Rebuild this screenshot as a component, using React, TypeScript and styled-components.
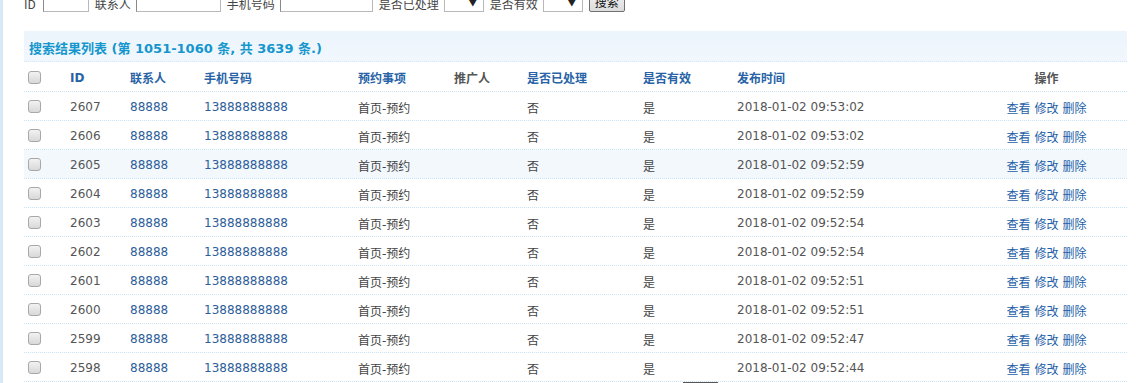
import { FunctionComponent } from "react";
import styled, { createGlobalStyle } from "styled-components";

const GlobalStyle = createGlobalStyle`
  html, body {
    margin: 0;
    padding: 0;
    background: #fff;
    overflow: hidden;
  }
  body {
    border-left: 3px solid #d6e9f5;
    min-height: 383px;
    box-sizing: border-box;
    font-family: "DejaVu Sans", "Noto Sans CJK SC", sans-serif;
    font-size: 12px;
    color: #333;
  }
`;

const cjk = `"DejaVu Sans", "Noto Sans CJK SC", sans-serif`;

const Page = styled.div`
  padding: 0 19px 0 21px;
  margin-top: -10px;
`;

const FilterBar = styled.div`
  display: flex;
  flex-direction: row;
  align-items: center;
  height: 22px;
  font-family: "Noto Sans CJK SC", sans-serif;
  font-size: 12px;
  color: #444;
`;

const Label = styled.span<{ $gap?: number }>`
  margin: 0 ${(p) => p.$gap ?? 5}px 0 0;
  line-height: 22px;
  position: relative;
  top: 3px;
`;

const TextBox = styled.div<{ $w: number }>`
  width: ${(p) => p.$w}px;
  height: 22px;
  box-sizing: border-box;
  border: 1px solid #b8b8b8;
  border-left-color: #8a8a8a;
  border-top-color: #8a8a8a;
  background: #fff;
  margin-right: 6px;
`;

const SelectBox = styled.div`
  width: 40px;
  height: 22px;
  box-sizing: border-box;
  border: 1px solid #b8b8b8;
  background: #fff;
  margin-right: 6px;
  display: flex;
  align-items: flex-end;
  justify-content: flex-end;
  padding: 0 6px 3px 0;
  font-size: 8px;
  color: #222;
`;

const SearchButton = styled.div`
  width: 36px;
  height: 22px;
  box-sizing: border-box;
  border: 1px solid #707070;
  border-radius: 2px;
  background: linear-gradient(#f4f4f4, #dcdcdc);
  display: flex;
  align-items: flex-end;
  justify-content: center;
  padding-bottom: 1px;
  font-size: 12px;
  color: #111;
`;

const Panel = styled.div`
  width: 1103px;
  margin-top: 19px;
`;

const TitleBar = styled.div`
  height: 31px;
  background: linear-gradient(#ecf4fc, #f1f7fd);
  border-bottom: 1px dotted #cfe6f7;
  box-sizing: border-box;
  display: flex;
  align-items: center;
  padding-left: 5px;
  padding-top: 2px;
  font-family: ${cjk};
  font-size: 13px;
  font-weight: bold;
  color: #1596cc;
`;

const cols = "42px 60px 74px 154px 96px 73px 116px 94px 233px 161px";

const Row = styled.div<{ $hl?: boolean; $h: number }>`
  display: grid;
  grid-template-columns: ${cols};
  height: ${(p) => p.$h}px;
  align-items: center;
  border-bottom: 1px dotted #c9e3f5;
  box-sizing: border-box;
  background: ${(p) => (p.$hl ? "#f3f8fd" : "#fff")};
`;

const Cell = styled.div<{ $color?: string; $center?: boolean; $bold?: boolean }>`
  padding-left: ${(p) => (p.$center ? 0 : 4)}px;
  text-align: ${(p) => (p.$center ? "center" : "left")};
  color: ${(p) => p.$color || "#555"};
  font-weight: ${(p) => (p.$bold ? "bold" : "normal")};
  font-family: ${cjk};
  font-size: 12px;
  white-space: nowrap;
  padding-top: 2px;
`;

const Check = styled.span`
  display: inline-block;
  width: 13px;
  height: 13px;
  box-sizing: border-box;
  border: 1px solid #a8a8a8;
  border-radius: 3px;
  background: linear-gradient(#f2f2f2, #d8d8d8);
  vertical-align: middle;
  margin-top: -2px;
`;

const Action = styled.a`
  color: #1f5fa8;
  text-decoration: none;
  margin: 0 2px;
`;

const Pager = styled.div`
  margin-left: 659px;
  width: 35px;
  border-top: 1px solid #555;
`;

const rows = [
  { id: 2607, done: "否", t: "2018-01-02 09:53:02" },
  { id: 2606, done: "否", t: "2018-01-02 09:53:02" },
  { id: 2605, done: "否", t: "2018-01-02 09:52:59", hl: true },
  { id: 2604, done: "否", t: "2018-01-02 09:52:59" },
  { id: 2603, done: "否", t: "2018-01-02 09:52:54" },
  { id: 2602, done: "否", t: "2018-01-02 09:52:54" },
  { id: 2601, done: "否", t: "2018-01-02 09:52:51" },
  { id: 2600, done: "否", t: "2018-01-02 09:52:51" },
  { id: 2599, done: "否", t: "2018-01-02 09:52:47" },
  { id: 2598, done: "否", t: "2018-01-02 09:52:44" },
];

const blue = "#2763a6";
const link = "#2d5d9a";

const App: FunctionComponent = () => {
  return (
    <Page>
      <GlobalStyle />
      <FilterBar>
        <Label $gap={7}>ID</Label>
        <TextBox $w={46} />
        <Label>联系人</Label>
        <TextBox $w={85} />
        <Label>手机号码</Label>
        <TextBox $w={93} />
        <Label>是否已处理</Label>
        <SelectBox>▼</SelectBox>
        <Label>是否有效</Label>
        <SelectBox>▼</SelectBox>
        <SearchButton>搜索</SearchButton>
      </FilterBar>
      <Panel>
        <TitleBar>搜索结果列表 (第 1051-1060 条, 共 3639 条.)</TitleBar>
        <Row $h={30}>
          <Cell>
            <Check />
          </Cell>
          <Cell $color={blue} $bold>ID</Cell>
          <Cell $color={blue} $bold>联系人</Cell>
          <Cell $color={blue} $bold>手机号码</Cell>
          <Cell $color={blue} $bold>预约事项</Cell>
          <Cell $color="#555" $bold>推广人</Cell>
          <Cell $color={blue} $bold>是否已处理</Cell>
          <Cell $color={blue} $bold>是否有效</Cell>
          <Cell $color={blue} $bold>发布时间</Cell>
          <Cell $color="#555" $bold $center>操作</Cell>
        </Row>
        {rows.map((r) => (
          <Row key={r.id} $h={29} $hl={r.hl}>
            <Cell>
              <Check />
            </Cell>
            <Cell>{r.id}</Cell>
            <Cell $color={link}>88888</Cell>
            <Cell $color={link}>13888888888</Cell>
            <Cell $color="#444">首页-预约</Cell>
            <Cell />
            <Cell $color="#444">{r.done}</Cell>
            <Cell $color="#444">是</Cell>
            <Cell>{r.t}</Cell>
            <Cell $center>
              <Action>查看</Action>
              <Action>修改</Action>
              <Action>删除</Action>
            </Cell>
          </Row>
        ))}
        <Pager />
      </Panel>
    </Page>
  );
};

export default App;
